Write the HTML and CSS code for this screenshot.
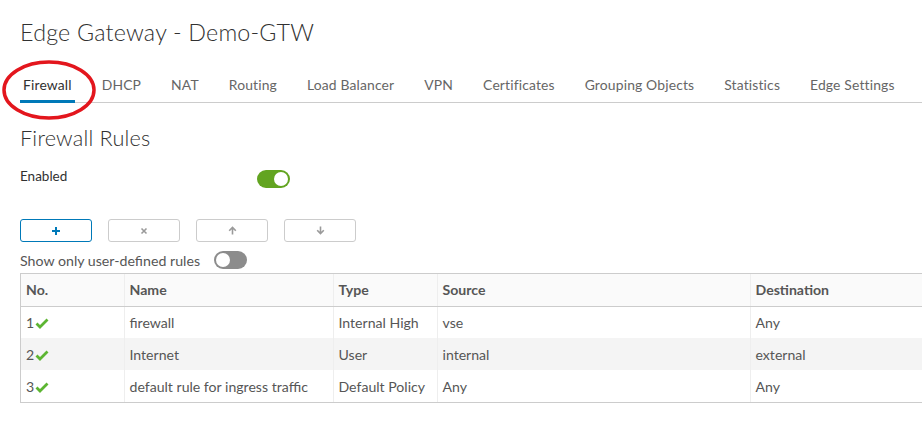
FILE: index.html
```html
<!DOCTYPE html>
<html lang="en">
<head>
  <meta charset="UTF-8">
  <title>Edge Gateway - Demo-GTW</title>
  <link rel="stylesheet" href="styles.css">
</head>
<body>
  <div class="page">
    <h1 class="page-title">Edge Gateway - Demo-GTW</h1>

    <ul class="tabs">
      <li class="tab active">Firewall</li>
      <li class="tab">DHCP</li>
      <li class="tab">NAT</li>
      <li class="tab">Routing</li>
      <li class="tab">Load Balancer</li>
      <li class="tab">VPN</li>
      <li class="tab">Certificates</li>
      <li class="tab">Grouping Objects</li>
      <li class="tab">Statistics</li>
      <li class="tab">Edge Settings</li>
    </ul>

    <h2 class="section-title">Firewall Rules</h2>

    <div class="enabled-row">
      <span class="enabled-label">Enabled</span>
      <span class="toggle on"></span>
    </div>

    <div class="actions">
      <button class="btn primary">
        <svg width="10" height="10" viewBox="0 0 10 10"><path d="M5 1v8M1 5h8" stroke="#0079b8" stroke-width="2"/></svg>
      </button>
      <button class="btn">
        <svg width="8" height="8" viewBox="0 0 8 8"><path d="M1.5 1.5l5 5M6.5 1.5l-5 5" stroke="#9a9a9a" stroke-width="1.6"/></svg>
      </button>
      <button class="btn">
        <svg width="9" height="9" viewBox="0 0 9 9"><path d="M4.5 8.5V2M1.2 4.8L4.5 1.5l3.3 3.3" stroke="#9a9a9a" stroke-width="1.6" fill="none"/></svg>
      </button>
      <button class="btn">
        <svg width="9" height="9" viewBox="0 0 9 9"><path d="M4.5 0.5V7M1.2 4.2l3.3 3.3 3.3-3.3" stroke="#9a9a9a" stroke-width="1.6" fill="none"/></svg>
      </button>
    </div>

    <div class="filter-row">
      <span>Show only user-defined rules</span>
      <span class="toggle off"></span>
    </div>

    <div class="grid">
      <table>
        <thead>
          <tr>
            <th class="col-no">No.</th>
            <th class="col-name">Name</th>
            <th class="col-type">Type</th>
            <th class="col-src">Source</th>
            <th class="col-dst">Destination</th>
          </tr>
        </thead>
        <tbody>
          <tr>
            <td>1<svg class="check" width="14" height="11" viewBox="0 0 14 11"><path d="M1.5 5.5l3.5 3.5 7.5-7.5" stroke="#5cb532" stroke-width="2.8" fill="none"/></svg></td>
            <td>firewall</td>
            <td>Internal High</td>
            <td>vse</td>
            <td>Any</td>
          </tr>
          <tr>
            <td>2<svg class="check" width="14" height="11" viewBox="0 0 14 11"><path d="M1.5 5.5l3.5 3.5 7.5-7.5" stroke="#5cb532" stroke-width="2.8" fill="none"/></svg></td>
            <td>Internet</td>
            <td>User</td>
            <td>internal</td>
            <td>external</td>
          </tr>
          <tr>
            <td>3<svg class="check" width="14" height="11" viewBox="0 0 14 11"><path d="M1.5 5.5l3.5 3.5 7.5-7.5" stroke="#5cb532" stroke-width="2.8" fill="none"/></svg></td>
            <td>default rule for ingress traffic</td>
            <td>Default Policy</td>
            <td>Any</td>
            <td>Any</td>
          </tr>
        </tbody>
      </table>
    </div>
  </div>

  <!-- annotation drawn over the screenshot -->
  <svg class="highlight" width="100" height="70" viewBox="0 0 100 70">
    <ellipse cx="49" cy="31" rx="45" ry="28" fill="none" stroke="#e3161d" stroke-width="3.5"/>
  </svg>
</body>
</html>
```

FILE: styles.css
```css
* {
  margin: 0;
  padding: 0;
  box-sizing: border-box;
}

body {
  font-family: Lato, "Open Sans", sans-serif;
  color: #565656;
  background: #fff;
  width: 922px;
  overflow: hidden;
}

.page {
  padding: 18px 0 0 20px;
}

.page-title {
  font-size: 23.3px;
  font-weight: 300;
  color: #313131;
  line-height: 28px;
  letter-spacing: 0.2px;
}

.tabs {
  list-style: none;
  display: flex;
  gap: 24px;
  margin-top: 31px;
  border-bottom: 1px solid #ccc;
}

.tab {
  font-size: 13.9px;
  line-height: 16px;
  padding: 0 3px 7px;
  margin-bottom: -1px;
  border-bottom: 3px solid transparent;
  color: #666;
  letter-spacing: 0.15px;
}

.tab.active {
  border-bottom-color: #0079b8;
  color: #313131;
}

.section-title {
  font-size: 21.7px;
  font-weight: 300;
  color: #313131;
  line-height: 26px;
  margin-top: 22px;
  letter-spacing: 0.2px;
}

.enabled-row {
  display: flex;
  align-items: flex-start;
  margin-top: 18px;
  height: 20px;
}

.enabled-label {
  font-size: 13.5px;
  color: #313131;
  width: 237px;
  line-height: 14px;
}

.toggle {
  position: relative;
  display: inline-block;
  width: 33px;
  height: 18px;
  border-radius: 9px;
  margin-top: 1px;
}

.toggle::after {
  content: "";
  position: absolute;
  top: 2px;
  width: 14px;
  height: 14px;
  border-radius: 50%;
  background: #fff;
}

.toggle.on {
  background: #62a420;
}

.toggle.on::after {
  right: 2px;
}

.toggle.off {
  background: #8c8c8c;
}

.toggle.off::after {
  left: 2px;
}

.actions {
  display: flex;
  gap: 16px;
  margin-top: 30px;
}

.btn {
  width: 72px;
  height: 23px;
  border: 1px solid #ccc;
  border-radius: 3px;
  background: #fff;
  display: flex;
  align-items: center;
  justify-content: center;
}

.btn.primary {
  border-color: #0079b8;
}

.filter-row {
  display: flex;
  align-items: center;
  gap: 14px;
  margin-top: 8px;
  font-size: 14.2px;
  height: 20px;
}

.filter-row .toggle {
  margin-top: 0;
}

.grid {
  margin-top: 3px;
  border: 1px solid #ccc;
  border-right: none;
  width: 920px;
}

table {
  border-collapse: collapse;
  width: 100%;
  font-size: 14.1px;
  table-layout: fixed;
}

th, td {
  text-align: left;
  padding: 0 5px;
  height: 32px;
  border-left: 1px solid #eee;
  white-space: nowrap;
}

th:first-child, td:first-child {
  border-left: none;
}

th {
  background: #fafafa;
  font-weight: 700;
  border-bottom: 1px solid #ccc;
  color: #565656;
}

tbody tr:nth-child(even) td {
  background: #f4f4f4;
}

.col-no { width: 103px; }
.col-name { width: 209px; }
.col-type { width: 104px; }
.col-src { width: 313px; }

.check {
  vertical-align: -1px;
  margin-left: 1px;
}

.highlight {
  position: absolute;
  left: 0;
  top: 59px;
}
```
